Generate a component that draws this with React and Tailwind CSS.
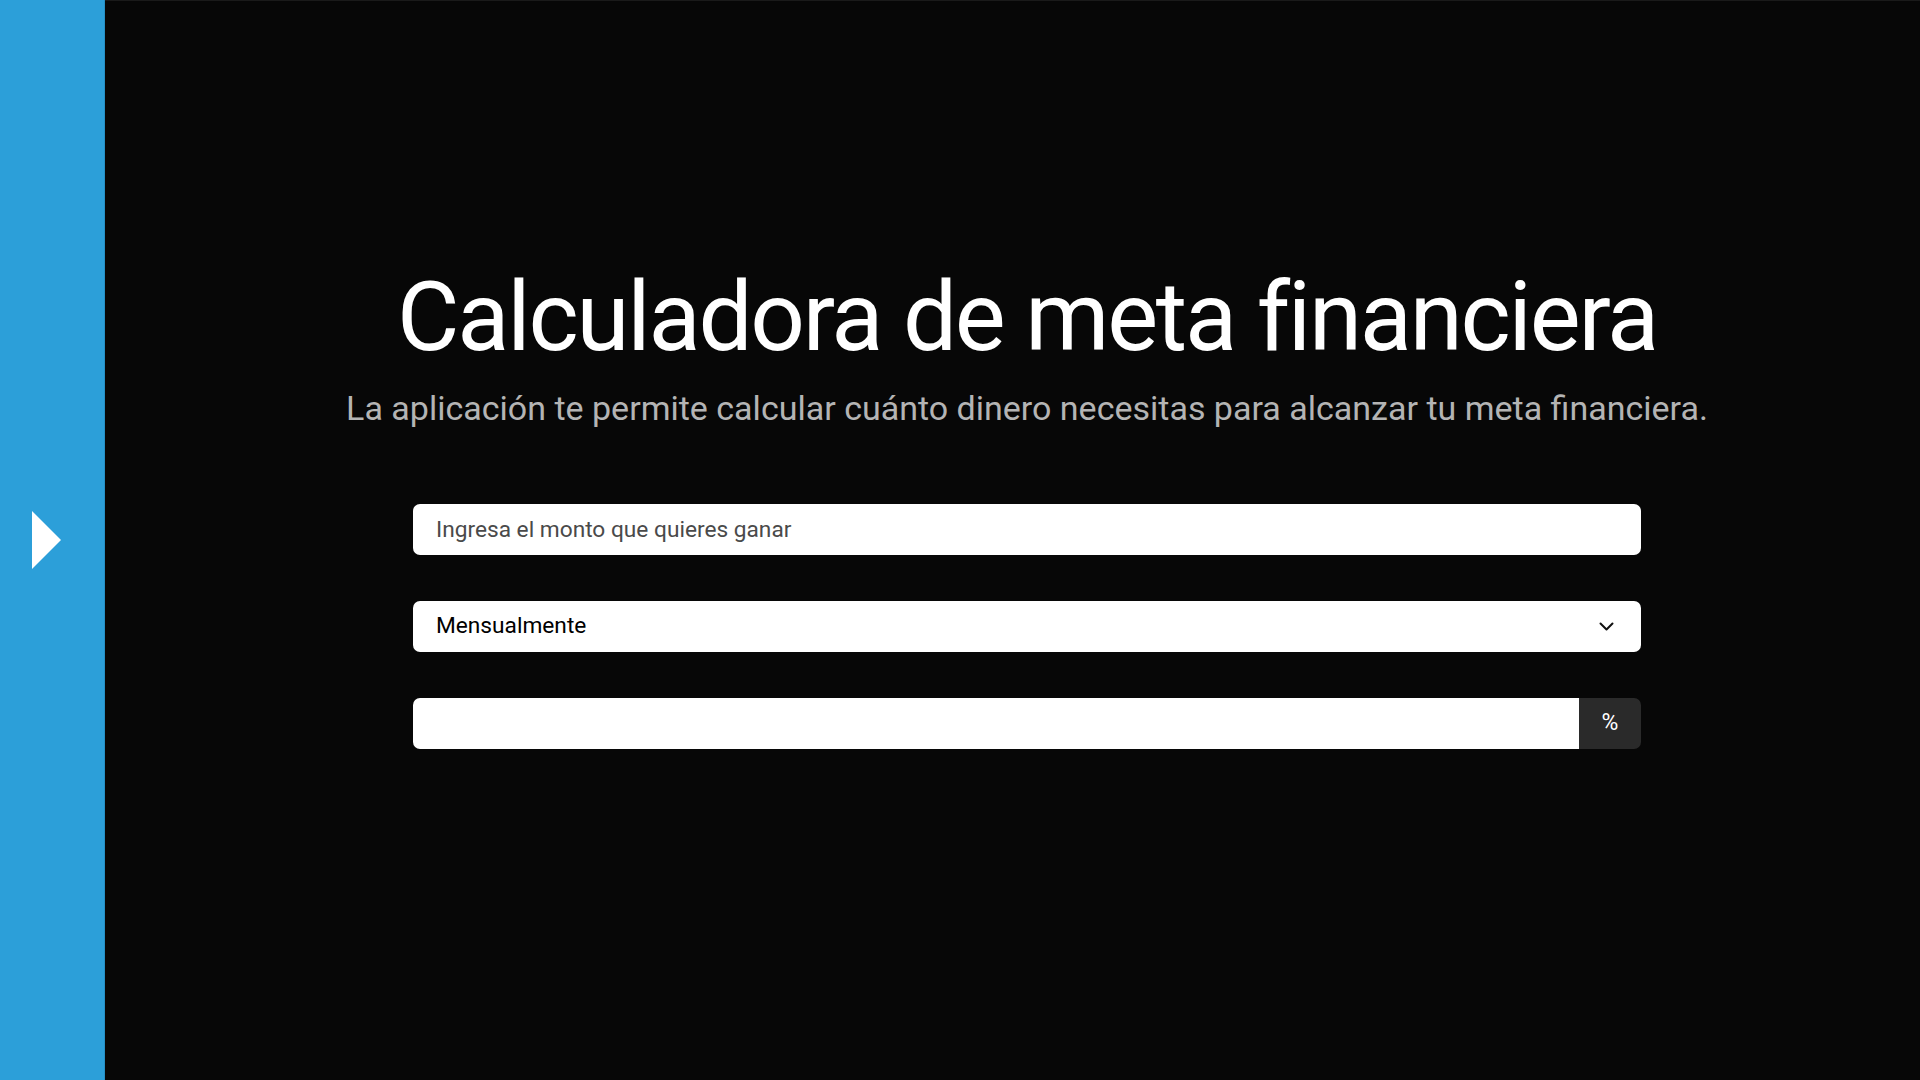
import { useState } from "react";

export default function App() {
    const [amount, setAmount] = useState("");
    const [period, setPeriod] = useState("mensual");
    const [rate, setRate] = useState("");

    return (
        <div className="flex h-screen w-full overflow-hidden bg-[#070707]" style={{ fontFamily: "Roboto, 'Noto Sans', sans-serif" }}>
            {/* Sidebar */}
            <aside className="flex h-full w-[105px] shrink-0 items-center bg-[#2c9fd9] pl-[32px] border-r border-[#2590c6]">
                <svg width="29" height="58" viewBox="0 0 29 58">
                    <polygon points="0,0 29,29 0,58" fill="#ffffff" />
                </svg>
            </aside>

            {/* Main */}
            <main className="flex flex-1 flex-col items-center border-t border-[#1a1a1a] pl-[29px] pt-[268px]">
                <h1 className="text-[96px] font-normal leading-none tracking-[-0.023em] text-white">Calculadora de meta financiera</h1>
                <p className="mt-[26px] text-[34px] leading-none text-[#b4b4b4]">
                    La aplicación te permite calcular cuánto dinero necesitas para alcanzar tu meta financiera.
                </p>

                <div className="mt-[79px] flex w-[1228px] flex-col gap-[46px]">
                    <input
                        type="text"
                        value={amount}
                        onChange={(e) => setAmount(e.target.value)}
                        placeholder="Ingresa el monto que quieres ganar"
                        className="h-[51px] w-full rounded-[7px] bg-white px-[23px] text-[22.7px] text-black placeholder:text-[#4a4a4a] outline-none"
                    />

                    <div className="relative h-[51px] w-full">
                        <select
                            value={period}
                            onChange={(e) => setPeriod(e.target.value)}
                            className="h-full w-full appearance-none rounded-[7px] bg-white px-[23px] text-[22.7px] text-black outline-none"
                        >
                            <option value="mensual">Mensualmente</option>
                            <option value="anual">Anualmente</option>
                        </select>
                        <svg className="pointer-events-none absolute right-[27px] top-[21px]" width="15" height="10" viewBox="0 0 15 10">
                            <polyline points="1.5,1.5 7.5,7.5 13.5,1.5" fill="none" stroke="#111" strokeWidth="2" strokeLinecap="round" strokeLinejoin="round" />
                        </svg>
                    </div>

                    <div className="flex h-[51px] w-full">
                        <input
                            type="text"
                            value={rate}
                            onChange={(e) => setRate(e.target.value)}
                            className="h-full flex-1 rounded-l-[7px] bg-white px-[23px] text-[22.7px] text-black outline-none"
                        />
                        <span className="flex h-full w-[62px] items-center justify-center rounded-r-[7px] bg-[#2a2a2a] text-[23px] text-white">%</span>
                    </div>
                </div>
            </main>
        </div>
    );
}
